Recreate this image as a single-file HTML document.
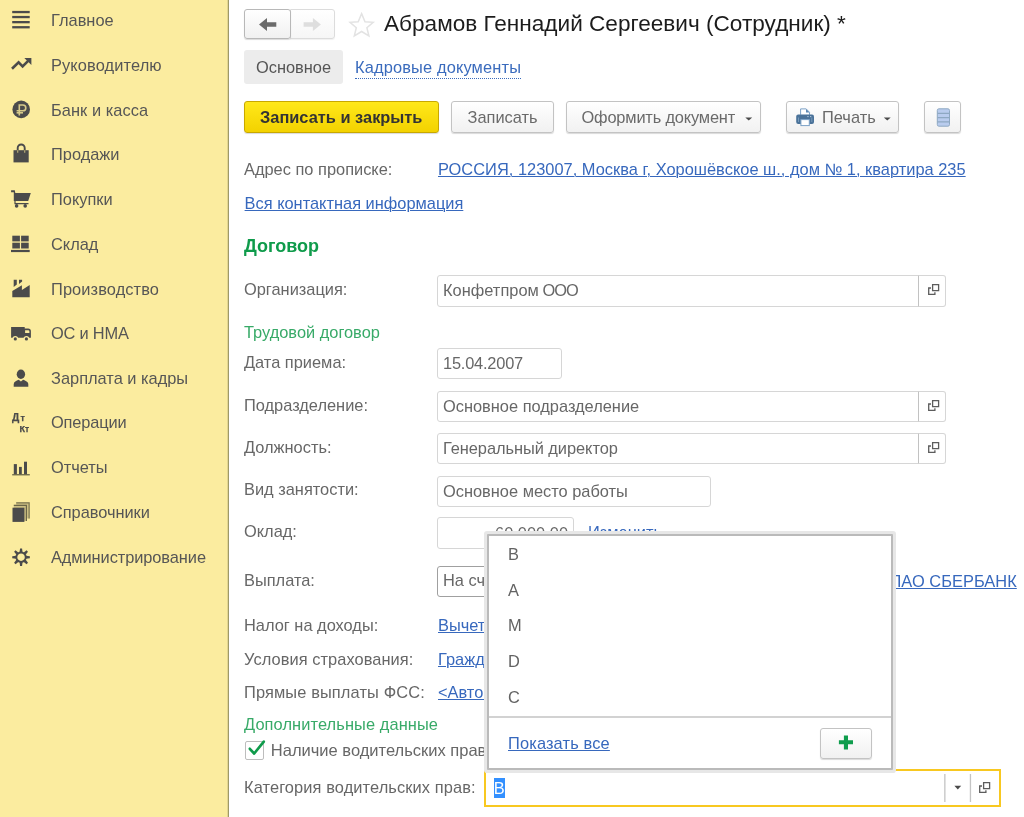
<!DOCTYPE html>
<html lang="ru">
<head>
<meta charset="utf-8">
<title>Абрамов Геннадий Сергеевич (Сотрудник)</title>
<style>
html,body{margin:0;padding:0;}
body{will-change:transform;width:1024px;height:817px;overflow:hidden;background:#fff;position:relative;font-family:"Liberation Sans",sans-serif;font-size:16.4px;color:#606060;}
.abs{position:absolute;white-space:nowrap;}
#side{position:absolute;left:0;top:0;width:228px;height:817px;background:#fbec9f;border-right:1px solid #9f9966;box-shadow:inset -1px 0 0 #e2d591;}
.nav{position:absolute;left:51px;height:20px;line-height:20px;font-size:16.4px;color:#565656;white-space:nowrap;}
.ico{position:absolute;left:8px;width:26px;height:26px;}
.lbl{position:absolute;left:244px;height:20px;line-height:20px;white-space:nowrap;color:#676767;}
.lnk{position:absolute;height:20px;line-height:20px;white-space:nowrap;color:#3768bd;text-decoration:underline;text-underline-offset:0.6px;text-decoration-thickness:1px;}
.grn{position:absolute;left:244px;height:20px;line-height:20px;white-space:nowrap;color:#38aa68;}
.inp{position:absolute;box-sizing:border-box;border:1px solid #d6d6d6;border-radius:3px;background:#fff;height:31px;line-height:29px;padding-left:5px;white-space:nowrap;color:#676767;overflow:hidden;}
.btn{position:absolute;box-sizing:border-box;border:1px solid #c3c3c3;border-radius:3px;background:linear-gradient(#ffffff,#f1f1f1);box-shadow:0 1px 1px rgba(0,0,0,0.15);height:31px;line-height:29px;text-align:center;white-space:nowrap;color:#6a6a6a;}
.opn{position:absolute;box-sizing:border-box;border:1px solid #d6d6d6;border-left:1px solid #c2c2c2;border-radius:0 3px 3px 0;background:#fff;height:31px;width:28px;}
</style>
</head>
<body>
<div id="side">
  
<svg class="abs" style="left:0;top:0" width="48" height="580" viewBox="0 0 48 580" fill="#4b4b4b" stroke="none">
  <!-- Главное -->
  <rect x="12.2" y="10.9" width="17.5" height="2.3"/><rect x="12.2" y="15.9" width="17.5" height="2.3"/><rect x="12.2" y="21" width="17.5" height="2.3"/><rect x="12.2" y="26.1" width="17.5" height="2.3"/>
  <!-- Руководителю -->
  <polyline points="12,68.8 18.6,62.4 22.6,66.4 28.4,60.6" fill="none" stroke="#4b4b4b" stroke-width="2.6"/>
  <polygon points="24.3,58 31.4,58 31.4,65.1"/>
  <!-- Банк и касса -->
  <circle cx="21.2" cy="109.4" r="8.8"/>
  <g fill="none" stroke="#d8cb8a" stroke-width="1.6">
    <path d="M19.3 115.6V105h3.6a2.9 2.9 0 0 1 0 5.8H16.6"/>
    <path d="M16.6 112.8h6.4"/>
  </g>
  <!-- Продажи -->
  <rect x="13.5" y="150.2" width="15.2" height="12.2"/>
  <path d="M17.7 150.5V148a3.5 3.5 0 0 1 7 0v2.5" fill="none" stroke="#4b4b4b" stroke-width="1.9"/>
  <path d="M17.7 150.3v2.4M24.7 150.3v2.4" fill="none" stroke="#b5aa76" stroke-width="1.2"/>
  <!-- Покупки -->
  <path d="M11.1 190.2h3.7l0.5 2.9h15.5l-2.6 7.8H15.6v2.2h12.9v1.1H14.4v-3.3h-0.6v-8.6H11.1z"/>
  <circle cx="16.6" cy="205.9" r="1.8"/><circle cx="25.2" cy="205.9" r="1.8"/>
  <!-- Склад -->
  <rect x="12.3" y="235.7" width="7.6" height="5.7"/><rect x="21.1" y="235.7" width="7.6" height="5.7"/>
  <rect x="12.3" y="242.7" width="7.6" height="5.8"/><rect x="21.1" y="242.7" width="7.6" height="5.8"/>
  <rect x="11" y="249.9" width="18.7" height="2.2"/>
  <!-- Производство -->
  <path d="M12.3 297.3V291.1L21.9 285.3V290.1L29.7 285V297.3z"/>
  <path d="M13.7 279.8h3.1v4.8l-3.1 2.4z"/>
  <path d="M19 279.8h3.1v1.7l-3.1 2.5z"/>
  <!-- ОС и НМА -->
  <path d="M11.1 327h13.6v1.4h3.4a2.8 2.8 0 0 1 2.8 2.8v6.6H11.1z"/>
  <path d="M25.1 330.3h3a1.3 1.3 0 0 1 1.3 1.3v1.3h-4.3z" fill="#fbec9f"/>
  <circle cx="15.3" cy="338.9" r="2.8" fill="#fbec9f"/><circle cx="26.4" cy="338.9" r="2.8" fill="#fbec9f"/>
  <circle cx="15.3" cy="338.9" r="1.6"/><circle cx="26.4" cy="338.9" r="1.6"/>
  <!-- Зарплата и кадры -->
  <ellipse cx="20.9" cy="374.2" rx="4.2" ry="4.7"/>
  <path d="M13.7 386.8v-2.6c0-2.3 2.6-3.6 5-4.4l2.2 1.6 2.2-1.6c2.4 0.8 5.2 2.1 5.2 4.4v2.6z"/>
  <!-- Операции -->
  <g font-family="Liberation Sans" font-weight="bold" stroke="#4b4b4b" stroke-width="0.25">
  <text x="11.9" y="421.3" font-size="10.2">Д</text>
  <text x="20.4" y="420.7" font-size="8.8">т</text>
  <text x="19.5" y="431.6" font-size="9">К</text>
  <text x="25" y="431.5" font-size="8.4">т</text>
  </g>
  <!-- Отчеты -->
  <rect x="13.8" y="464.1" width="3.1" height="10.4"/><rect x="19" y="466.9" width="2.8" height="7.6"/><rect x="24" y="461.7" width="3" height="12.8"/>
  <rect x="12.2" y="474.1" width="17.6" height="1.3" fill="#6a6648"/>
  <!-- Справочники -->
  <rect x="16.2" y="502.3" width="13.5" height="16.2" fill="#cdc083"/>
  <path d="M16.2 502.9h12.9v15.6" fill="none" stroke="#7d7752" stroke-width="1.2"/>
  <rect x="13.8" y="504.8" width="13.2" height="16.1" fill="#cdc083"/>
  <path d="M13.8 505.4h12.6v15.5" fill="none" stroke="#6b6648" stroke-width="1.2"/>
  <rect x="12.5" y="507.7" width="11.9" height="14.2"/>
  <!-- Администрирование -->
  <g transform="translate(21.05 557.2)">
    <circle r="4.7" fill="none" stroke="#4b4b4b" stroke-width="1.9"/>
    <g fill="#4b4b4b">
      <path id="tooth" d="M-1.5 -4.9L-1 -8.8h2L1.5 -4.9z"/>
      <path d="M-1.5 -4.9L-1 -8.8h2L1.5 -4.9z" transform="rotate(45)"/>
      <path d="M-1.5 -4.9L-1 -8.8h2L1.5 -4.9z" transform="rotate(90)"/>
      <path d="M-1.5 -4.9L-1 -8.8h2L1.5 -4.9z" transform="rotate(135)"/>
      <path d="M-1.5 -4.9L-1 -8.8h2L1.5 -4.9z" transform="rotate(180)"/>
      <path d="M-1.5 -4.9L-1 -8.8h2L1.5 -4.9z" transform="rotate(225)"/>
      <path d="M-1.5 -4.9L-1 -8.8h2L1.5 -4.9z" transform="rotate(270)"/>
      <path d="M-1.5 -4.9L-1 -8.8h2L1.5 -4.9z" transform="rotate(315)"/>
    </g>
  </g>
</svg>
  <div class="nav" style="top:10px">Главное</div>
  <div class="nav" style="top:55px;letter-spacing:0.12px">Руководителю</div>
  <div class="nav" style="top:100px;letter-spacing:0.05px">Банк и касса</div>
  <div class="nav" style="top:144px">Продажи</div>
  <div class="nav" style="top:189px">Покупки</div>
  <div class="nav" style="top:234px">Склад</div>
  <div class="nav" style="top:279px;letter-spacing:0.1px">Производство</div>
  <div class="nav" style="top:323px;letter-spacing:-0.2px">ОС и НМА</div>
  <div class="nav" style="top:368px">Зарплата и кадры</div>
  <div class="nav" style="top:412px;letter-spacing:-0.14px">Операции</div>
  <div class="nav" style="top:457px">Отчеты</div>
  <div class="nav" style="top:502px;letter-spacing:-0.05px">Справочники</div>
  <div class="nav" style="top:547px;letter-spacing:-0.08px">Администрирование</div>
</div>

<!-- header -->
<div class="btn" style="left:290px;top:9px;width:45px;height:30px;border-radius:0 3px 3px 0;border-color:#dcdcdc;box-shadow:0 1px 1px rgba(0,0,0,0.06);background:linear-gradient(#fff,#f6f6f6);"></div>
<div class="btn" style="left:244px;top:9px;width:47px;height:30px;border-radius:3px;border-color:#b8b8b8;"></div>
<div class="abs" id="title" style="left:384px;top:10px;height:28px;line-height:28px;font-size:22.6px;color:#1c1c1c;">Абрамов Геннадий Сергеевич (Сотрудник) *</div>

<div class="abs" style="left:244px;top:50px;width:99px;height:34px;background:#ececec;border-radius:3px;"></div>
<div class="abs" style="left:256px;top:57px;height:20px;line-height:20px;color:#555;">Основное</div>
<div class="abs" style="left:355px;top:57px;height:20px;line-height:20px;color:#3a6bbd;border-bottom:1px dotted #3a6bbd;height:21px;letter-spacing:0.15px;">Кадровые документы</div>

<!-- command bar -->
<div class="btn" style="left:244px;top:101px;height:32px;line-height:30px;width:195px;background:linear-gradient(#ffe81a,#f3d200);border-color:#c8a800;color:#333;font-weight:bold;text-align:left;padding-left:15px;">Записать и закрыть</div>
<div class="btn" style="left:451px;top:101px;height:32px;line-height:30px;width:103px;text-align:left;padding-left:15.5px;">Записать</div>
<div class="btn" style="left:566px;top:101px;height:32px;line-height:30px;width:195px;text-align:left;padding-left:14.5px;letter-spacing:-0.17px;">Оформить документ</div>
<div class="btn" style="left:786px;top:101px;height:32px;line-height:30px;width:113px;text-align:left;padding-left:35px;">Печать</div>
<div class="btn" style="left:924px;top:101px;height:32px;line-height:30px;width:37px;"></div>

<!-- form -->
<div class="lbl" style="top:159px">Адрес по прописке:</div>
<div class="lnk" style="left:438px;top:159px;letter-spacing:0.02px">РОССИЯ, 123007, Москва г, Хорошёвское ш., дом № 1, квартира 235</div>
<div class="lnk" style="left:244.6px;top:193px">Вся контактная информация</div>
<div class="grn" style="top:236px;font-size:18px;font-weight:bold;color:#0f9b4b;">Договор</div>

<div class="lbl" style="top:279px">Организация:</div>
<div class="inp" style="left:437px;top:275px;width:482px;height:32px;border-radius:3px 0 0 3px;letter-spacing:0.02px;">Конфетпром<span style="letter-spacing:-1px"> ООО</span></div>
<div class="opn" style="left:918px;top:275px;height:32px;"></div>

<div class="grn" style="top:322px">Трудовой договор</div>
<div class="lbl" style="top:352px">Дата приема:</div>
<div class="inp" style="left:437px;top:348px;width:125px;letter-spacing:-0.2px;">15.04.2007</div>

<div class="lbl" style="top:395px">Подразделение:</div>
<div class="inp" style="left:437px;top:391px;width:482px;border-radius:3px 0 0 3px;">Основное подразделение</div>
<div class="opn" style="left:918px;top:391px;"></div>

<div class="lbl" style="top:437px">Должность:</div>
<div class="inp" style="left:437px;top:433px;width:482px;border-radius:3px 0 0 3px;letter-spacing:-0.05px;">Генеральный директор</div>
<div class="opn" style="left:918px;top:433px;"></div>

<div class="lbl" style="top:479px">Вид занятости:</div>
<div class="inp" style="left:437px;top:476px;width:274px;">Основное место работы</div>

<div class="lbl" style="top:521px">Оклад:</div>
<div class="inp" style="left:437px;top:517px;height:32px;line-height:31px;width:137px;text-align:right;padding-right:5px;">60 000,00</div>
<div class="lnk" style="left:588px;top:522px">Изменить</div>

<div class="lbl" style="top:570px">Выплата:</div>
<div class="inp" style="left:437px;top:566px;width:300px;border-color:#a0a0a0;line-height:27px;">На счет</div>
<div class="lnk" style="left:889.5px;top:571px;letter-spacing:0.04px">ПАО СБЕРБАНК</div>

<div class="lbl" style="top:615px">Налог на доходы:</div>
<div class="lnk" style="left:438px;top:615px">Вычеты</div>
<div class="lbl" style="top:649px;letter-spacing:0.07px">Условия страхования:</div>
<div class="lnk" style="left:438px;top:649px">Граждане</div>
<div class="lbl" style="top:682px;letter-spacing:0.12px">Прямые выплаты ФСС:</div>
<div class="lnk" style="left:438px;top:682px">&lt;Автоматически&gt;</div>

<div class="grn" style="top:714px;letter-spacing:0.1px">Дополнительные данные</div>
<div class="abs" style="left:245px;top:741px;width:19px;height:19px;box-sizing:border-box;border:1px solid #bdbdbd;border-radius:2px;background:#fff;"></div>
<div class="lbl" style="left:270.8px;top:740px;font-size:16.5px">Наличие водительских прав</div>

<div class="lbl" style="top:777px;letter-spacing:0.1px">Категория водительских прав:</div>
<div class="abs" style="left:484px;top:769px;width:517px;height:38px;box-sizing:border-box;border:2px solid #f8c820;background:#fff;"></div>
<div class="abs" style="left:493.5px;top:778px;width:11.3px;height:20px;line-height:20px;background:#3390ff;color:#fff;text-align:center;">B</div>

<!-- popup -->
<div class="abs" id="pop" style="left:487px;top:534px;width:406px;height:236px;box-sizing:border-box;border:2px solid #bababa;border-radius:1px;background:#fff;box-shadow:0 0 0 3px #e7e7e7;"></div>
<div class="abs" style="left:508px;top:544px;height:20px;line-height:20px;color:#636363;">B</div>
<div class="abs" style="left:508px;top:580px;height:20px;line-height:20px;color:#636363;">A</div>
<div class="abs" style="left:508px;top:615px;height:20px;line-height:20px;color:#636363;">M</div>
<div class="abs" style="left:508px;top:651px;height:20px;line-height:20px;color:#636363;">D</div>
<div class="abs" style="left:508px;top:687px;height:20px;line-height:20px;color:#636363;">C</div>
<div class="abs" style="left:489px;top:716px;width:402px;height:2px;background:#d2d2d2;"></div>
<div class="lnk" style="left:508px;top:733px;letter-spacing:0.15px">Показать все</div>
<div class="btn" style="left:820px;top:728px;width:52px;height:31px;"></div>

<svg class="abs" id="ov" style="left:0;top:0;z-index:5;pointer-events:none" width="1024" height="817" viewBox="0 0 1024 817">
  <!-- back / forward arrows -->
  <path d="M259 24.5l8-6.6v4.4h9.3v4.4H267v4.4z" fill="#6b6b6b"/>
  <path d="M320.9 24.5l-8-6.6v4.4h-9.3v4.4h9.3v4.4z" fill="#dedede"/>
  <!-- star -->
  <path d="M361.6 13.6l3.4 8.1 8.2 0.6-6.3 5.4 2 8.3-7.3-4.5-7.3 4.5 2-8.3-6.3-5.4 8.2-0.6z" fill="#fff" stroke="#e3e3e3" stroke-width="1.5" stroke-linejoin="miter"/>
  <!-- dropdown triangles -->
  <path d="M745.3 117.6h6.9l-3.45 3z" fill="#4a4a4a"/>
  <path d="M883.8 117.6h6.9l-3.45 3z" fill="#4a4a4a"/>
  <!-- printer -->
  <path d="M800.6 114.8v-5.9h5.6l3.3 3.3v2.6" fill="#fff" stroke="#7aa0c6" stroke-width="1"/>
  <path d="M806 108.9v3.5h3.5z" fill="#5f8ab5"/>
  <rect x="796.2" y="114.6" width="17.8" height="9.4" rx="2" fill="#4a7299"/>
  <rect x="800.9" y="119.6" width="8.4" height="6" fill="#fff" stroke="#7aa0c6" stroke-width="1"/>
  <path d="M798.5 117.5v4.5M811.8 117.5v4.5" stroke="#7d9dbd" stroke-width="0.9"/>
  <rect x="807.3" y="116" width="1.3" height="1.1" fill="#a9c1d8"/><rect x="810" y="116" width="1.3" height="1.1" fill="#a9c1d8"/>
  <!-- menu icon -->
  <rect x="937.3" y="108.8" width="12.2" height="17.4" rx="1.6" fill="#b9ccee" stroke="#8ea8c2" stroke-width="1"/>
  <path d="M937.5 113.4h11.8M937.5 117.6h11.8M937.5 121.8h11.8" stroke="#8ea8c2" stroke-width="1.3"/>
  <!-- open icons -->
  <path d="M932.6 284.6h6v6h-6z M931 288H928.7V294.3H934.9V292.2" fill="none" stroke="#5c5c5c" stroke-width="1.3"/> <path d="M932.6 400.6h6v6h-6z M931 404H928.7V410.3H934.9V408.2" fill="none" stroke="#5c5c5c" stroke-width="1.3"/> <path d="M932.6 442.6h6v6h-6z M931 446H928.7V452.3H934.9V450.2" fill="none" stroke="#5c5c5c" stroke-width="1.3"/> <path d="M983.6 782.6h6v6h-6z M982 786H979.7V792.3H985.9V790.2" fill="none" stroke="#5c5c5c" stroke-width="1.3"/>
  <!-- checkbox mark -->
  <path d="M249.8 748.8l4.4 4.7 9.6-11.9" fill="none" stroke="#0f9b4b" stroke-width="2.7" stroke-linecap="round" stroke-linejoin="round"/>
  <!-- plus -->
  <path d="M843.9 735.4h4.1v4.8h5v4.1h-5v5.1h-4.1v-5.1h-5v-4.1h5z" fill="#0f9d4d"/>
  <!-- yellow input parts -->
  <rect x="944.2" y="774" width="1.3" height="28" fill="#c4c4c4"/>
  <rect x="969.8" y="774" width="1.3" height="28" fill="#c4c4c4"/>
  <path d="M954.4 785.8h6.8l-3.4 3.6z" fill="#4a4a4a"/>
</svg>
</body>
</html>
